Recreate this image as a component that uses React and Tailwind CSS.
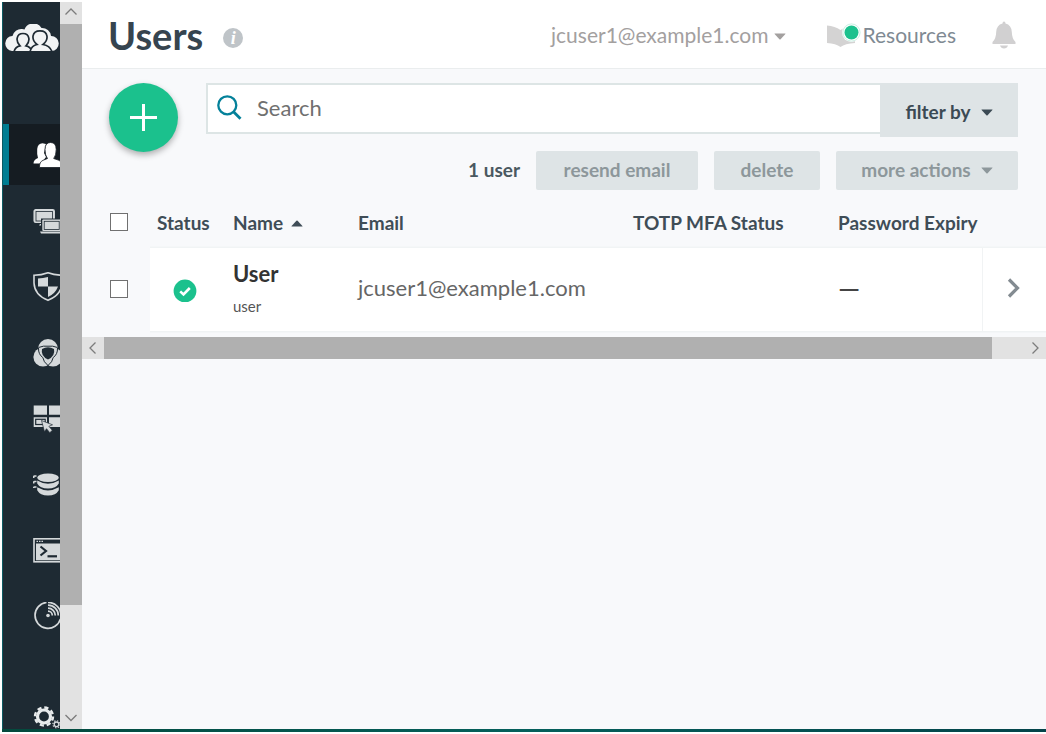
import React from "react";

const ICON = "#d5d9db";
const DARK = "#1e2a33";

function Logo() {
  return (
    <svg width="54" height="27" viewBox="0 0 54 27" className="block shrink-0" aria-hidden="true">
      <path
        d="M7 27 A7 7.500 0 0 1 7.500 12 A9 9 0 0 1 17 5 Q18.500 5 19.500 5.500 A9.500 9.500 0 0 1 36.500 4 A9 9 0 0 1 46 12 A7.500 7.500 0 0 1 46.500 27 Z"
        fill="#f1f3f4"
      />
      <path
        d="M9 28 Q10 22.800 15 21.800 C10.500 17.500 11 9.500 18 9.500 C25 9.500 25.500 17.500 21 21.800 Q26 22.800 27 28"
        fill="#f1f3f4"
        stroke={DARK}
        strokeWidth="1.700"
      />
      <path
        d="M25 28 Q26 22 32 20.500 C26 16 26.500 6.800 35 6.800 C43.500 6.800 44 16 38 20.500 Q45.500 22 47 28"
        fill="#f1f3f4"
        stroke={DARK}
        strokeWidth="1.700"
      />
    </svg>
  );
}

function Glyph({ children }) {
  return (
    <svg width="30" height="30" viewBox="0 -1 30 30" className="block shrink-0" fill="none" aria-hidden="true">
      {children}
    </svg>
  );
}

function UsersGlyph() {
  return (
    <Glyph>
      <path
        d="M.5 22.500 Q.5 18.500 5 17 Q3.800 13 4.200 8 Q4.800 2.500 9.500 2.300 L13 3 L11 12 L13 16 L8 22.500 Z"
        fill="#fff"
      />
      <path
        d="M6.500 26.500 Q6.200 21 10 19.300 L14.500 17.500 Q12 14.500 12 8.500 Q12 1.500 17.600 1.500 Q23.200 1.500 23.200 8.500 Q23.200 14.500 20.700 17.500 L26 19.300 Q30 21 30 26.500 Z"
        fill="#fff"
        stroke="#151c22"
        strokeWidth=".8"
      />
    </Glyph>
  );
}

function DevicesGlyph() {
  return (
    <Glyph>
      <rect x="1.200" y="2.800" width="20" height="12.500" rx="1.500" fill={ICON} stroke={ICON} strokeWidth="1.500" />
      <rect x="3" y="4.500" width="16.500" height="9.500" stroke={DARK} strokeWidth=".8" fill={ICON} />
      <path d="M7 17h5v1.500H6z" fill={ICON} />
      <path d="M8 11.500h22v16H6v-3h2z" fill={DARK} />
      <rect x="9.300" y="12.500" width="19" height="11.500" rx="1" fill={ICON} />
      <rect x="11.200" y="14.300" width="15" height="8.200" stroke={DARK} strokeWidth=".8" fill={ICON} />
      <path d="M7 24.600h23v1.800H8z" fill={ICON} />
    </Glyph>
  );
}

function ShieldGlyph() {
  return (
    <Glyph>
      <path
        d="M15 -.3 Q8.500 2.200 1 2.200 V10 Q1.500 22 15 27.300 Q28.500 22 29 10 V2.200 Q21.500 2.200 15 -.3Z"
        stroke={ICON}
        strokeWidth="1.600"
      />
      <path d="M15 4 Q10 5.300 5 5.500 V13.500 H15 Z" fill={ICON} />
      <path d="M15 13.500 H25 Q22.500 20.500 15 24 Z" fill={ICON} />
    </Glyph>
  );
}

function GroupsGlyph() {
  return (
    <Glyph>
      <circle cx="10" cy="18" r="9.600" fill={ICON} />
      <circle cx="20" cy="18" r="9.600" fill={ICON} />
      <circle cx="15" cy="10" r="10" fill={ICON} />
      <path d="M9 10 Q15 6.500 21 10 Q22.500 17 15 20.500 Q7.500 17 9 10Z" fill={DARK} />
      <g stroke={DARK} strokeWidth="1">
        <path d="M5.500 8.500 Q10.500 6.500 15 7.200 Q19.500 6.500 24.500 8.500" />
        <path d="M5.500 9 Q5.300 15.500 9.800 18.500 Q10.500 23 15 26.500" />
        <path d="M24.500 9 Q24.700 15.500 20.200 18.500 Q19.500 23 15 26.500" />
      </g>
    </Glyph>
  );
}

function AppsGlyph() {
  return (
    <Glyph>
      <path d="M.7 .5h13.300v9.300H.7zM16 .5h14v9.300H16zM.7 12.200h13.300v9.800H.7zM16 12.200h14V22H16z" fill={ICON} />
      <rect x="2.700" y="14.300" width="9.500" height="5.200" stroke={DARK} strokeWidth="1.200" />
      <path
        d="M8.500 15.500 L19.500 19.800 L15.900 21.300 L19.300 25.300 L16.800 27.700 L13.500 23.700 L11.500 26.800 Z"
        fill={ICON}
        stroke={DARK}
        strokeWidth=".7"
      />
    </Glyph>
  );
}

function DatabaseGlyph() {
  return (
    <Glyph>
      <ellipse cx="15" cy="6.800" rx="10.800" ry="4.200" fill={ICON} />
      <path d="M4.200 9.500 Q15 16 25.800 9.500 V12.500 Q23 17.500 15 17.500 Q7 17.500 4.200 12.500Z" fill={ICON} />
      <path d="M4.200 16.300 Q15 22.500 25.800 16.300 V19.300 Q23 24.500 15 24.500 Q7 24.500 4.200 19.300Z" fill={ICON} />
      <path
        d="M3.500 5H1.700q-1 0-1 1v1M3.500 10.500H1.700q-1 0-1 1v1M3.500 16H1.700q-1 0-1 1"
        stroke={ICON}
        strokeWidth="1.600"
      />
    </Glyph>
  );
}

function TerminalGlyph() {
  return (
    <Glyph>
      <rect x="1" y="1.800" width="32" height="23" stroke={ICON} strokeWidth="1.600" />
      <path d="M3 6.500H30V23.300H3z" fill={ICON} />
      <path d="M3.500 4.300h1.500M6 4.300h1.500M8.500 4.300h1.500" stroke={ICON} strokeWidth="1.300" />
      <path d="M7.500 9.500 L13 14 L7.500 18.500" stroke={DARK} strokeWidth="2.200" />
      <path d="M14.500 19.300H24" stroke={DARK} strokeWidth="2.200" />
    </Glyph>
  );
}

function RadarGlyph() {
  return (
    <Glyph>
      <path d="M13.500 -.6 A13 13 0 1 0 27.500 16" stroke={ICON} strokeWidth="1.700" />
      <circle cx="15" cy="12.500" r="1.800" fill={ICON} />
      <path
        d="M15 8.200 A4.300 4.300 0 0 1 19.300 12.500 M15 5.200 A7.300 7.300 0 0 1 22.300 12.500 M15 2.200 A10.300 10.300 0 0 1 25.300 12.500 M15 -.6 A13 13 0 0 1 28 12.500"
        stroke={ICON}
        strokeWidth="1.700"
      />
    </Glyph>
  );
}

function GearGlyph() {
  return (
    <Glyph>
      <circle cx="11" cy="16.500" r="6.500" stroke="#e8ebec" strokeWidth="3.200" />
      <circle cx="11" cy="16.500" r="9" stroke="#e8ebec" strokeWidth="2.400" strokeDasharray="4.200 2.870" />
      <circle cx="23.500" cy="24.300" r="2.300" stroke={ICON} strokeWidth="1.300" />
      <circle cx="23.500" cy="24.300" r="3.600" stroke={ICON} strokeWidth="1.200" strokeDasharray="1.400 1.430" />
    </Glyph>
  );
}

const NAV = [
  { label: "Users", icon: UsersGlyph, active: true },
  { label: "Devices", icon: DevicesGlyph },
  { label: "Policies", icon: ShieldGlyph },
  { label: "Groups", icon: GroupsGlyph },
  { label: "Applications", icon: AppsGlyph },
  { label: "Directories", icon: DatabaseGlyph },
  { label: "Commands", icon: TerminalGlyph },
  { label: "RADIUS", icon: RadarGlyph },
];

function Sidebar() {
  return (
    <nav className="flex w-[58px] shrink-0 flex-col overflow-hidden border-l border-[#0b5a62] bg-[#1e2a33] pt-[22px]">
      <a href="#home" aria-label="Home" className="ml-0.5">
        <Logo />
      </a>
      <ul className="mt-[73px] flex flex-col gap-[5px]">
        {NAV.map(({ label, icon: Icon, active }) => (
          <li key={label}>
            <a
              href="#nav"
              aria-label={label}
              aria-current={active ? "page" : undefined}
              className={
                active
                  ? "flex h-[61px] items-center border-l-[6px] border-[#017d92] bg-[#151c22] pl-6"
                  : "flex h-[61px] items-center pl-[30px]"
              }
            >
              <Icon />
            </a>
          </li>
        ))}
      </ul>
      <a href="#settings" aria-label="Settings" className="mt-auto flex shrink-0 pl-[30px]">
        <GearGlyph />
      </a>
    </nav>
  );
}

function Arrow({ d }) {
  return (
    <svg width="22" height="22" viewBox="0 0 22 22" fill="none" stroke="#7c7c7c" strokeWidth="1.300" className="block shrink-0" aria-hidden="true">
      <path d={d} />
    </svg>
  );
}

function Caret({ up, className = "" }) {
  return (
    <svg width="12" height="7" viewBox="0 0 12 7" className={className} aria-hidden="true">
      <path
        d={up ? "M.8 6.500h10.400q.6 0 .2-.6L6.600 .7q-.6-.5-1.200 0L.6 5.900q-.4.600.2.600z" : "M.8 .5h10.400q.6 0 .2.600L6.600 6.300q-.6.500-1.200 0L.6 1.100q-.4-.6.200-.6z"}
        fill="currentColor"
      />
    </svg>
  );
}

function Header() {
  return (
    <header className="flex h-[67px] shrink-0 items-center border-b border-[#eaedee] bg-white pr-[30px] pl-[26px]">
      <h1 className="text-[38px] leading-[48px] font-bold text-[#36444f]">Users</h1>
      <button
        type="button"
        aria-label="About users"
        className="mt-1.5 ml-5 flex size-5 items-center justify-center rounded-full bg-[#bfc4c8] font-['Liberation_Serif',serif] text-[18px] leading-5 font-bold text-white italic"
      >
        i
      </button>
      <div className="ml-auto flex items-center text-[21px] leading-7">
        <button type="button" className="flex items-center gap-1.5 text-[#a3a09f]">
          jcuser1@example1.com
          <Caret className="mt-0.5" />
        </button>
        <a href="#resources" className="ml-10 flex items-center text-[#7f8a93]">
          <svg width="36" height="30" viewBox="0 0 36 30" className="block" aria-hidden="true">
            <path d="M1 5.500 Q9 6 14.500 10 Q20 6 29 5.500 V23 Q19 23.500 14.500 27 Q10 23.500 1 23Z" fill="#d4d3d3" />
            <circle cx="25.500" cy="12.500" r="9.500" fill="#fff" />
            <circle cx="25.500" cy="12.500" r="8.600" fill="none" stroke="#bdebdc" strokeWidth=".8" />
            <circle cx="25.500" cy="12.500" r="7" fill="#1bc18d" />
          </svg>
          Resources
        </a>
        <button type="button" aria-label="Notifications" className="ml-9 text-[#d1d0d1]">
          <svg width="24" height="28" viewBox="0 0 24 28" className="block" fill="currentColor" aria-hidden="true">
            <path d="M12 .5 Q13.500 .5 13.500 2.500 Q19.500 4 19.800 11 Q20 18 23.500 21 V23 H.5 V21 Q4 18 4.200 11 Q4.500 4 10.500 2.500 Q10.500 .5 12 .5Z" />
            <path d="M8 24.500h8q-1 3-4 3t-4-3z" />
          </svg>
        </button>
      </div>
    </header>
  );
}

function Toolbar() {
  const action = "h-[39px] rounded-[2px] bg-[#dee4e6] text-[#8d979b]";
  return (
    <div className="flex gap-7 pt-3.5 pr-7 pl-[27px]">
      <button
        type="button"
        aria-label="Add user"
        className="flex size-[69px] shrink-0 items-center justify-center rounded-full bg-[#1bc18d] shadow-[0_3px_6px_rgba(0,0,0,0.3)]"
      >
        <svg width="27" height="27" viewBox="0 0 27 27" stroke="#fff" strokeWidth="3" aria-hidden="true">
          <path d="M13.500 0v27M0 13.500h27" />
        </svg>
      </button>
      <div className="flex min-w-0 flex-1 flex-col gap-3.5">
        <div className="flex items-start">
          <label className="flex h-[51px] min-w-0 flex-1 items-center border-2 border-r-0 border-[#dde5e5] bg-white pb-0.5 pl-2">
            <svg width="26" height="26" viewBox="0 0 26 26" fill="none" stroke="#04819a" strokeWidth="2.300" className="shrink-0" aria-hidden="true">
              <circle cx="11.300" cy="10.300" r="9" />
              <path d="M17.500 16.800 L24.500 23.800" strokeWidth="2.800" />
            </svg>
            <input
              type="search"
              aria-label="Search"
              placeholder="Search"
              className="ml-[15px] h-full min-w-0 flex-1 bg-transparent text-[22px] text-[#666] outline-none placeholder:text-[#707070]"
            />
          </label>
          <button
            type="button"
            aria-haspopup="menu"
            className="flex h-[54px] w-[138px] shrink-0 items-center justify-center gap-2.5 bg-[#dee4e6] pt-1 text-[19px] font-bold text-[#3b4a54]"
          >
            filter by
            <Caret />
          </button>
        </div>
        <div className="flex items-center justify-end gap-4 text-[19px] font-bold">
          <span className="text-[#4a5860]">1 user</span>
          <button type="button" disabled className={action + " w-[162px]"}>
            resend email
          </button>
          <button type="button" disabled className={action + " w-[106px]"}>
            delete
          </button>
          <button type="button" disabled className={action + " flex w-[182px] items-center justify-center gap-2.5"}>
            more actions
            <Caret />
          </button>
        </div>
      </div>
    </div>
  );
}

const BOX = "block size-[18px] appearance-none border border-[#707070] bg-white checked:bg-[#1bc18d]";
const CELL = "bg-white pb-1 shadow-[0_-1px_0_#f1f4f5,0_-2px_0_#f5f7f8,0_1px_0_#f0f3f4,0_2px_0_#f4f6f8]";

function UsersTable() {
  return (
    <table className="w-full table-fixed text-left">
      <colgroup>
        <col className="w-[68px]" />
        <col className="w-[83px]" />
        <col className="w-[125px]" />
        <col />
        <col className="w-[205px]" />
        <col className="w-[144px]" />
        <col className="w-16" />
      </colgroup>
      <thead>
        <tr className="h-[58px] text-[19px] leading-6 text-[#3f4d57]">
          <th className="pt-1.5 pl-7">
            <input type="checkbox" aria-label="Select all users" className={BOX} />
          </th>
          <th className="pt-2 pl-[7px]">Status</th>
          <th className="pt-2" aria-sort="ascending">
            <button type="button" className="flex items-center gap-2">
              Name
              <Caret up />
            </button>
          </th>
          <th className="pt-2">Email</th>
          <th className="pt-2">TOTP MFA Status</th>
          <th className="pt-2 whitespace-nowrap">Password Expiry</th>
          <th aria-label="Details" />
        </tr>
      </thead>
      <tbody>
        <tr className="h-[83px]">
          <td className="pb-0.5 pl-7">
            <input type="checkbox" aria-label="Select user" className={BOX} />
          </td>
          <td className={CELL + " pl-[23px]"}>
            <svg width="24" height="24" viewBox="0 0 24 24" className="mt-1 block" role="img" aria-label="Active">
              <circle cx="12" cy="13" r="11.400" fill="#1bc18d" />
              <path d="M7.200 13.400 L10.500 16.500 L16.800 10" fill="none" stroke="#fff" strokeWidth="2.600" />
            </svg>
          </td>
          <td className={CELL}>
            <div className="pt-1 text-[22px] leading-8 font-bold text-[#333]">User</div>
            <div className="text-[15px] leading-8 text-[#555]">user</div>
          </td>
          <td className={CELL + " text-[22px] text-[#666]"}>jcuser1@example1.com</td>
          <td className={CELL} />
          <td className={CELL + " text-[28px] text-[#444]"}>—</td>
          <td className={CELL + " border-l border-[#f1f3f4]"}>
            <button type="button" aria-label="Open user" className="ml-6 block">
              <svg width="14" height="20" viewBox="0 0 14 20" fill="none" stroke="#838b91" strokeWidth="3.200" aria-hidden="true">
                <path d="M2 1.500 L10.500 10 L2 18.500" />
              </svg>
            </button>
          </td>
        </tr>
      </tbody>
    </table>
  );
}

export default function App() {
  return (
    <div className="flex h-screen flex-col bg-white pt-0.5 pb-0.5 pl-0.5 font-[Lato,sans-serif] antialiased">
      <div className="flex min-h-0 flex-1">
        <Sidebar />
        <div className="flex w-[22px] shrink-0 flex-col bg-[#e2e2e2]" aria-hidden="true">
          <Arrow d="M5.500 12.500 L11 7 L16.500 12.500" />
          <div className="min-h-0 flex-1">
            <div className="h-[85%] bg-[#b0b0b0]" />
          </div>
          <Arrow d="M5.500 8 L11 13.500 L16.500 8" />
        </div>
        <div className="flex min-w-0 flex-1 flex-col bg-[#f8f9fb]">
          <Header />
          <main>
            <Toolbar />
            <UsersTable />
            <div className="mt-1.5 flex h-[22px] bg-[#e2e2e2]" aria-hidden="true">
              <Arrow d="M13.500 5.500 L8 11 L13.500 16.500" />
              <div className="flex flex-1">
                <div className="flex-28 bg-[#b0b0b0]" />
                <div className="flex-1" />
              </div>
              <Arrow d="M8.500 5.500 L14 11 L8.500 16.500" />
            </div>
          </main>
        </div>
      </div>
      <div className="h-[3px] shrink-0 bg-linear-to-r from-[#04493d] via-[#05605c] to-[#04444a]" />
    </div>
  );
}
